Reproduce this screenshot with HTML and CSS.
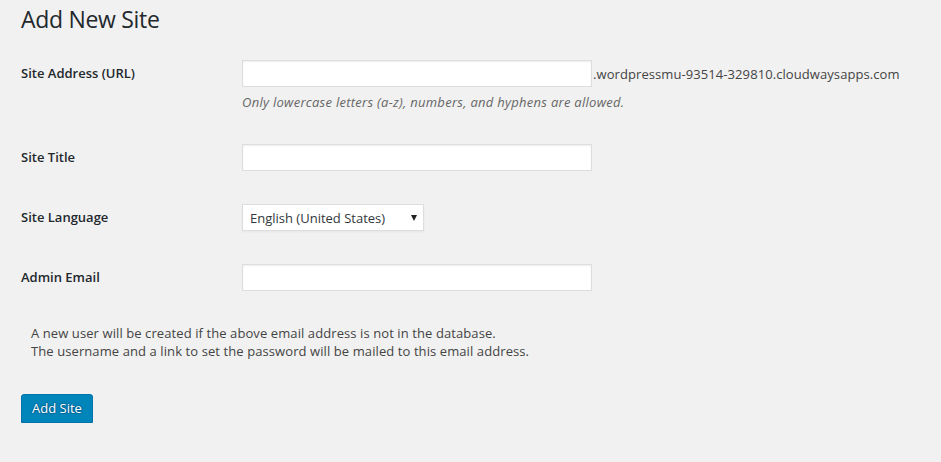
FILE: index.html
```html
<!DOCTYPE html>
<html lang="en">
<head>
<meta charset="utf-8">
<title>Add New Site</title>
<link rel="stylesheet" href="styles.css">
</head>
<body>
<div class="wrap">
  <h1 class="page-title">Add New Site</h1>
  <form class="site-form">
    <div class="form-rows">
      <div class="form-row">
        <label class="row-label" for="site-address">Site Address (URL)</label>
        <div class="row-field">
          <div class="address-line">
            <input class="text-input" id="site-address" type="text">
            <span class="address-suffix">.wordpressmu-93514-329810.cloudwaysapps.com</span>
          </div>
          <p class="description">Only lowercase letters (a-z), numbers, and hyphens are allowed.</p>
        </div>
      </div>
      <div class="form-row">
        <label class="row-label" for="site-title">Site Title</label>
        <div class="row-field">
          <input class="text-input" id="site-title" type="text">
        </div>
      </div>
      <div class="form-row">
        <label class="row-label" for="site-language">Site Language</label>
        <div class="row-field">
          <span class="select-wrap">
            <select class="select-input" id="site-language">
              <option>English (United States)</option>
            </select>
          </span>
        </div>
      </div>
      <div class="form-row">
        <label class="row-label" for="admin-email">Admin Email</label>
        <div class="row-field">
          <input class="text-input" id="admin-email" type="text">
        </div>
      </div>
    </div>
    <p class="note">A new user will be created if the above email address is not in the database.<br>The username and a link to set the password will be mailed to this email address.</p>
    <button class="primary-button" type="button">Add Site</button>
  </form>
</div>
</body>
</html>
```
FILE: styles.css
```css
* { box-sizing: border-box; }

html, body {
  margin: 0;
  padding: 0;
  background: #f1f1f1;
}

body {
  font-family: "Open Sans", "Noto Sans", sans-serif;
  font-size: 13px;
  color: #444;
}

.wrap {
  padding: 5px 20px 0 21px;
}

.page-title {
  margin: 0;
  font-size: 23px;
  font-weight: 400;
  line-height: 29px;
  letter-spacing: -0.3px;
  color: #23282d;
}

.site-form {
  margin-top: 26px;
}

.form-rows {
  display: flex;
  flex-direction: column;
  gap: 33px;
}

.form-row {
  display: flex;
  align-items: flex-start;
}

.row-label {
  width: 221px;
  flex: none;
  line-height: 27px;
  font-weight: 600;
  color: #23282d;
}

.row-field {
  display: flex;
  flex-direction: column;
}

.address-line {
  display: flex;
  align-items: center;
}

.text-input {
  width: 350px;
  height: 27px;
  margin: 0;
  padding: 3px 5px;
  border: 1px solid #ddd;
  background: #fff;
  box-shadow: inset 0 1px 2px rgba(0, 0, 0, 0.07);
  font: inherit;
  color: #32373c;
  outline: none;
}

.address-suffix {
  padding-left: 1px;
  letter-spacing: 0.08px;
  color: #444;
  white-space: nowrap;
}

.description {
  margin: 6px 0 0;
  line-height: 18px;
  font-style: italic;
  letter-spacing: 0.28px;
  color: #666;
}

.select-wrap {
  position: relative;
  display: inline-block;
}

.select-wrap::after {
  content: "";
  position: absolute;
  right: 7px;
  top: 11px;
  border-left: 3.5px solid transparent;
  border-right: 3.5px solid transparent;
  border-top: 6px solid #222;
  pointer-events: none;
}

.select-input {
  appearance: none;
  -webkit-appearance: none;
  width: 182px;
  height: 27px;
  margin: 0;
  padding: 0 20px 0 7px;
  border: 1px solid #ddd;
  border-radius: 0;
  background: #fff;
  box-shadow: 0 1px 2px rgba(0, 0, 0, 0.05);
  font: inherit;
  color: #32373c;
  outline: none;
}

.note {
  margin: 33px 0 0 10px;
  line-height: 18px;
  letter-spacing: 0.09px;
  color: #444;
}

.primary-button {
  display: block;
  margin-top: 34px;
  height: 29px;
  padding: 0 10px 1px;
  border: 1px solid #0073aa;
  border-radius: 3px;
  background: #0085ba;
  box-shadow: 0 1px 0 #006799;
  text-shadow: 0 -1px 1px #006799, 1px 0 1px #006799, 0 1px 1px #006799, -1px 0 1px #006799;
  font: inherit;
  line-height: 26px;
  color: #fff;
  cursor: pointer;
}
```
